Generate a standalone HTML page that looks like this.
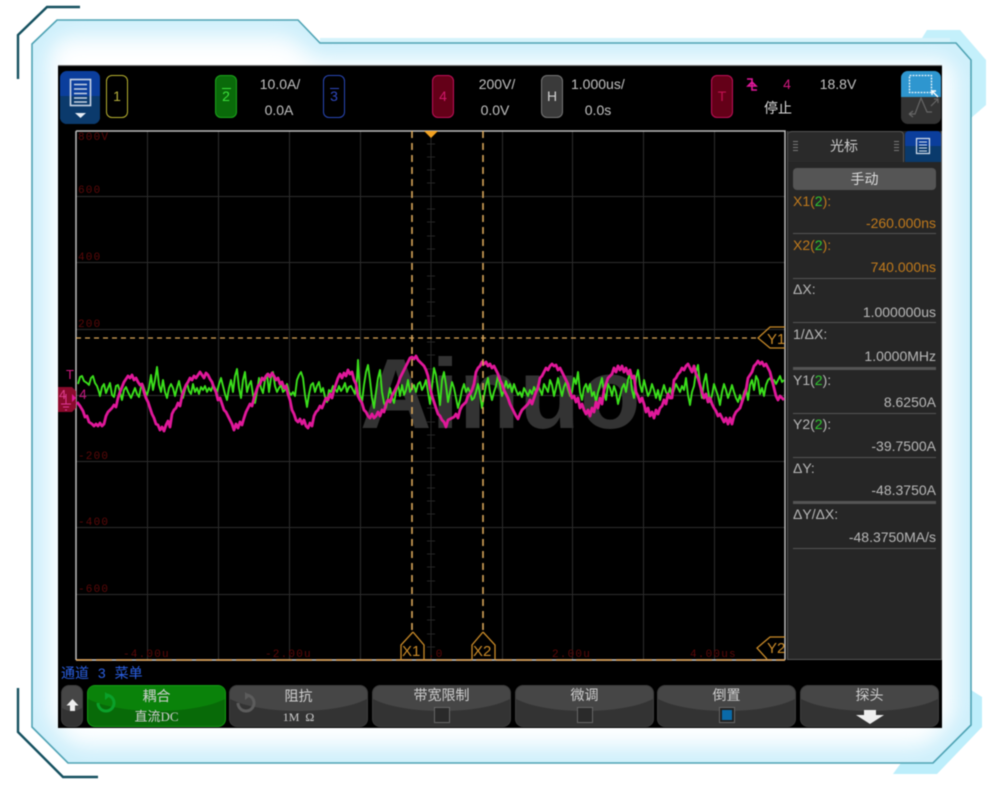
<!DOCTYPE html>
<html><head><meta charset="utf-8">
<style>
html,body{margin:0;padding:0;background:#fff}
body{width:1000px;height:786px;position:relative;overflow:hidden;font-family:"Liberation Sans","Noto Sans CJK SC",sans-serif;color:#c2c2c2;filter:blur(.45px)}
.a{position:absolute;white-space:nowrap}
.c{position:absolute;white-space:nowrap;transform:translateX(-50%)}
.t{font-size:14px;line-height:16px}
.box{position:absolute;width:22px;height:43px;top:75px;border-radius:6px;box-sizing:border-box;border:1px solid;text-align:center;font-size:14px;line-height:41px}
.key{position:absolute;top:685px;height:42px;width:139px;border-radius:8px;background:#333;overflow:hidden;box-sizing:border-box;border:1px solid #3c3c3c}
.key:before{content:"";position:absolute;left:-10px;right:-10px;top:-22px;height:47px;border-radius:50%;background:#464646}
.key.g{background:#086a08;border-color:#149c14}
.key.g:before{background:#0a820a}
.key span{position:absolute;left:0;right:0;text-align:center;z-index:1;color:#cfcfcf;font-size:14px;line-height:16px}
.cb{position:absolute;left:61px;top:21px;width:14px;height:14px;background:#2a2a2a;border:1px solid #666;z-index:1}
.lab{position:absolute;left:793px;font-size:14px;line-height:16px;color:#b8b8b8;white-space:nowrap}
.val{position:absolute;right:64px;font-size:14px;line-height:16px;color:#b8b8b8;white-space:nowrap}
.o{color:#c07a1c}.gr{color:#2fc82f}
.sep{position:absolute;left:793px;width:143px;height:1px;background:#555}
.rl{position:absolute;font:11px "Liberation Mono",monospace;letter-spacing:1.2px;color:#5c0808;white-space:nowrap;line-height:12px}
</style></head><body>

<svg class="a" style="left:0;top:0" width="1000" height="786" viewBox="0 0 1000 786">
<defs>
<clipPath id="fr"><path d="M32 44L57 20H298L320 43H956L971 60V725L933 763H68L32 727Z"/></clipPath>
<filter id="bl" x="-10%" y="-10%" width="120%" height="120%"><feGaussianBlur stdDeviation="13"/></filter>
</defs>
<path d="M919 43L927 30H960L986 60V105L971 118V60L956 43Z" fill="#c4f0fb"/>
<path d="M320 38H950V43H320Z" fill="#d6f3fb"/>
<path d="M971 690L982 697V727L937 774H893L901 763H933L971 725Z" fill="#bdeefb"/>
<path d="M32 44L57 20H298L320 43H956L971 60V725L933 763H68L32 727Z" fill="#fff"/>
<g clip-path="url(#fr)"><path d="M32 44L57 20H298L320 43H956L971 60V725L933 763H68L32 727Z" fill="none" stroke="#bfeafa" stroke-width="26" filter="url(#bl)"/></g>
<path d="M32 44L57 20H298L320 43H956L971 60V725L933 763H68L32 727Z" fill="none" stroke="#4fa3b4" stroke-width="1.6"/>
<path d="M18 79V35L47 7H80" fill="none" stroke="#14505f" stroke-width="2.4"/>
<path d="M18 688V732L63 777H98" fill="none" stroke="#14505f" stroke-width="2.4"/>
</svg>

<div class="a" style="left:58px;top:65px;width:884px;height:663px;background:#000;border-top:1px solid #777;box-sizing:border-box"></div>

<!-- plot -->
<svg class="a" style="left:58px;top:65px" width="884" height="663" viewBox="58 65 884 663">
<g stroke="#2c2c2c" stroke-width="1">
<path d="M147.5 131V660M218.5 131V660M289.5 131V660M360.5 131V660M502.5 131V660M572.5 131V660M643.5 131V660M714.5 131V660"/>
<path d="M76 196.5H785M76 262.5H785M76 329.5H785M76 395.5H785M76 461.5H785M76 527.5H785M76 594.5H785"/>
</g>
<path d="M431 131V660" stroke="#262626"/>
<path d="M427 144H435M427 157H435M427 170H435M427 183H435M427 209H435M427 222H435M427 236H435M427 249H435M427 276H435M427 289H435M427 302H435M427 316H435M427 342H435M427 355H435M427 369H435M427 382H435M427 408H435M427 422H435M427 435H435M427 448H435M427 475H435M427 488H435M427 501H435M427 514H435M427 541H435M427 554H435M427 567H435M427 581H435M427 607H435M427 620H435M427 634H435M427 647H435" stroke="#262626"/>
<path d="M76 131H785V660M76 131V660" fill="none" stroke="#bdbdbd" stroke-width="1.5"/>
<path d="M76 660H785" stroke="#cfcfcf" stroke-width="1.5"/>
<text x="360" y="428" font-family="Liberation Sans" font-weight="700" font-size="99" fill="#333">Ainuo</text>
<polyline fill="none" stroke="#3be01c" stroke-width="1.9" stroke-linejoin="round" points="78,384 80,377 82,376 84,381 87,383 89,385 91,378 93,376 95,383 97,386 99,392 100,396 102,387 104,384 106,393 108,388 110,383 112,395 114,397 116,386 118,385 120,392 122,400 124,390 126,387 128,392 131,398 133,393 135,388 137,394 139,397 141,387 143,385 145,391 147,395 149,388 151,375 153,390 155,380 157,367 159,385 161,392 163,380 165,392 167,398 169,388 171,384 173,388 175,396 177,388 179,381 181,390 183,398 185,390 187,383 189,391 191,394 193,384 195,392 197,388 199,394 201,387 203,390 205,386 207,392 209,388 211,391 213,385 215,388 217,392 219,384 221,378 223,386 225,394 227,400 229,388 231,380 233,392 235,376 237,369 239,388 241,398 243,380 245,372 247,392 249,385 251,381 253,395 255,403 257,392 259,378 261,388 263,393 265,380 267,374 269,392 271,378 273,372 275,386 277,392 279,388 281,385 283,392 285,390 287,384 289,392 291,395 293,392 295,396 297,380 299,375 301,372 303,378 305,395 307,407 309,394 311,385 313,383 315,392 317,386 319,382 321,392 323,388 325,397 327,402 329,390 331,392 333,386 335,389 337,392 339,386 341,391 343,388 345,383 347,392 349,387 351,386 353,390 355,394 357,378 358,360 360,395 362,402 364,385 366,372 368,365 370,380 372,398 374,408 376,392 378,378 380,370 382,392 384,403 386,408 388,398 390,388 392,397 394,403 396,392 398,384 400,396 402,385 404,395 406,390 408,380 410,392 412,388 414,385 416,392 418,384 420,382 422,390 424,386 426,380 428,392 430,404 432,386 434,368 436,375 438,390 440,405 442,380 444,372 446,385 448,402 450,392 452,382 454,388 456,398 458,408 460,400 462,390 464,384 466,392 468,388 470,392 472,400 474,398 476,392 478,384 480,394 482,408 484,396 486,385 488,378 490,392 492,400 494,392 496,386 498,375 500,386 502,396 504,390 506,381 508,388 510,384 512,392 514,384 516,390 518,395 520,392 522,397 524,388 526,392 528,396 530,390 532,394 534,387 536,392 538,385 540,390 542,395 544,384 546,388 548,392 550,380 552,385 554,396 556,388 558,378 560,388 562,396 564,387 566,382 568,390 570,396 572,392 574,378 576,384 578,372 580,392 582,400 584,388 586,384 588,392 590,384 592,396 594,392 596,402 598,392 600,385 602,378 604,392 606,400 608,384 610,388 612,396 614,386 616,392 618,404 620,396 622,388 624,384 626,392 628,380 630,372 632,390 634,398 636,378 638,370 640,385 642,392 644,380 646,388 648,396 650,392 652,384 654,390 656,398 658,390 660,400 662,392 664,385 666,392 668,395 670,388 672,396 674,390 676,384 678,388 680,392 682,386 684,390 686,378 688,395 690,405 692,392 694,386 696,372 698,365 700,385 702,398 704,382 706,374 708,390 710,402 712,395 714,384 716,390 718,396 720,405 722,392 724,384 726,390 728,398 730,392 732,385 734,392 736,398 738,402 740,395 742,402 744,392 746,388 748,400 750,385 752,380 754,390 756,376 758,380 760,394 762,388 764,396 766,385 768,380 770,378 772,382 774,380 776,384 778,380 780,376 782,382 784,380"/>
<polyline fill="none" stroke="#e0189a" stroke-width="2.8" stroke-linejoin="round" points="77,402 80,406 83,411 85,417 87,416 89,422 92,424 94,426 96,424 98,426 100,423 102,426 104,424 106,416 108,412 110,410 112,408 114,405 116,407 118,398 120,392 122,387 124,382 126,379 128,376 130,378 132,375 134,380 136,378 138,382 140,385 142,384 144,392 146,398 148,402 150,408 152,414 154,418 156,424 158,425 160,430 162,427 164,431 166,425 168,421 170,427 172,414 174,410 176,408 178,403 180,406 182,396 184,390 186,385 188,382 190,378 192,380 194,376 196,378 198,375 200,372 202,375 204,378 206,373 208,375 210,379 212,382 214,388 216,392 218,400 220,398 222,404 224,410 226,412 228,416 230,420 232,424 234,430 236,424 238,428 240,422 242,425 244,418 246,412 248,408 250,404 252,406 254,398 256,392 258,386 260,384 262,378 264,380 266,376 268,374 270,377 272,373 274,376 276,380 278,378 280,384 282,382 284,388 286,386 288,394 290,400 292,410 294,414 296,420 298,422 300,419 302,424 304,420 306,426 308,428 310,423 312,426 314,416 316,412 318,410 320,406 322,408 324,403 326,398 328,400 330,394 332,398 334,390 336,384 338,378 340,374 342,378 344,373 346,376 348,370 350,374 352,372 354,380 356,384 358,396 360,400 362,403 364,410 366,412 368,416 370,418 372,414 374,418 376,416 378,412 380,416 382,410 384,412 386,404 388,400 390,402 392,396 394,392 396,388 398,384 400,378 402,374 404,370 406,366 408,362 410,358 412,357 414,359 416,356 418,360 420,362 422,364 424,366 426,370 428,376 430,388 432,396 434,402 436,408 438,414 440,416 442,420 444,422 446,427 448,420 450,419 452,418 454,417 456,414 458,418 460,410 462,406 464,404 466,402 468,396 470,394 472,390 474,384 476,372 478,368 480,366 482,362 484,364 486,362 488,366 490,364 492,368 494,366 496,370 498,374 500,380 502,384 504,390 506,394 508,398 510,404 512,408 514,412 516,416 518,419 520,414 522,410 524,408 526,406 528,404 530,400 532,404 534,398 536,392 538,388 540,378 542,376 544,372 546,368 548,370 550,366 552,364 554,366 556,365 558,370 560,368 562,372 564,376 566,380 568,384 570,392 572,398 574,396 576,402 578,398 580,408 582,404 584,410 586,414 588,410 590,416 592,408 594,412 596,402 598,408 600,398 602,404 604,390 606,384 608,378 610,376 612,374 614,368 616,372 618,366 620,370 622,366 624,372 626,368 628,374 630,370 632,378 634,376 636,392 638,396 640,402 642,398 644,404 646,412 648,408 650,416 652,412 654,418 656,410 658,414 660,408 662,406 664,400 666,404 668,394 670,398 672,398 674,380 676,378 678,374 680,372 682,368 684,370 686,366 688,364 690,368 692,372 694,366 696,374 698,378 700,385 702,392 704,398 706,394 708,402 710,398 712,404 714,408 716,411 718,416 720,414 722,418 724,422 726,418 728,424 730,418 732,424 734,416 736,412 738,410 740,408 742,402 744,396 746,390 748,378 750,375 752,372 754,366 756,364 758,361 760,364 762,362 764,366 766,364 768,368 770,372 772,380 774,388 776,396 778,400 780,396 782,398 784,400"/>
<path d="M412 131V633M483 131V633" stroke="#d9a65a" stroke-width="1.6" stroke-dasharray="7 5"/>
<path d="M76 338H759" stroke="#d9a65a" stroke-width="1.2" stroke-dasharray="5 4"/>
<path d="M76 660H785" stroke="#e0a050" stroke-width="1.6" stroke-dasharray="16 4"/>
<path d="M424 131H438L431 138Z" fill="#f0a020"/>
<path d="M413 632L424 645V660M413 632L401 645V660M483 632L495 645V660M483 632L472 645V660" fill="none" stroke="#c98a28" stroke-width="1.3"/>
<path d="M785 327H770L758 338L770 348H785M785 637H770L757 648L767 659" fill="none" stroke="#c98a28" stroke-width="1.3"/>
<path d="M58 387H72L76 391V408L72 412H58Z" fill="#8a0a2c"/>
<path d="M66 394V404M61 404H71M63 407H69M65 410H67" stroke="#e0389a" stroke-width="1"/>
<path d="M72 394L76 398L72 402Z" fill="#e0189a"/>
</svg>
<div class="a" style="left:402px;top:643px;font-size:15px;line-height:17px;color:#c98a28">X1</div>
<div class="a" style="left:473px;top:643px;font-size:15px;line-height:17px;color:#c98a28">X2</div>
<div class="a" style="left:767px;top:331px;font-size:15px;line-height:17px;color:#c98a28">Y1</div>
<div class="a" style="left:767px;top:640px;font-size:15px;line-height:17px;color:#c98a28">Y2</div>
<div class="a" style="left:66px;top:367px;font-size:13px;line-height:15px;color:#d0187f">T</div>
<div class="a" style="left:59px;top:387px;font-size:13px;line-height:15px;color:#e04090">4</div>
<div class="a" style="left:79px;top:386px;font-size:14px;line-height:16px;color:#c0187f">4</div>

<div class="rl" style="left:78px;top:132px">800V</div>
<div class="rl" style="left:78px;top:185px">600</div>
<div class="rl" style="left:78px;top:252px">400</div>
<div class="rl" style="left:78px;top:319px">200</div>
<div class="rl" style="left:78px;top:451px">-200</div>
<div class="rl" style="left:78px;top:517px">-400</div>
<div class="rl" style="left:78px;top:584px">-600</div>
<div class="rl" style="left:123px;top:649px">-4.00u</div>
<div class="rl" style="left:265px;top:649px">-2.00u</div>
<div class="rl" style="left:428px;top:649px">.0</div>
<div class="rl" style="left:552px;top:649px">2.00u</div>
<div class="rl" style="left:690px;top:649px">4.00us</div>

<!-- header -->
<svg class="a" style="left:60px;top:71px" width="41" height="53" viewBox="0 0 41 53">
<rect width="40" height="53" rx="7" fill="#0b3e9c"/>
<path d="M0 25H40V46A7 7 0 0 1 33 53H7A7 7 0 0 1 0 46Z" fill="#0b3a6c"/>
<rect x="10.5" y="8.5" width="20" height="26" fill="none" stroke="#c8d4e4" stroke-width="1.6"/>
<path d="M14 13.5H27M14 18H27M14 22.500H27M14 27H27M14 31H27" stroke="#c8d4e4" stroke-width="1.5"/>
<path d="M15 42H26L20.500 47Z" fill="#e8eef6"/>
</svg>
<div class="box" style="left:106px;border-color:#b8b230;color:#b4ae3c">1</div>
<div class="box" style="left:215px;background:#0a6a0a;border-color:#1ca51c;color:#3ce03c">2<span class="a" style="left:6px;top:12px;width:9px;height:1px;background:#3ce03c"></span></div>
<div class="c t" style="left:280px;top:76px">10.0A/</div>
<div class="c t" style="left:279px;top:102px">0.0A</div>
<div class="box" style="left:323px;border-color:#2a48b8;color:#2f49c0">3<span class="a" style="left:6px;top:12px;width:9px;height:1px;background:#2f49c0"></span></div>
<div class="box" style="left:432px;background:#640018;border-color:#c0105a;color:#d0186a">4</div>
<div class="c t" style="left:497px;top:76px">200V/</div>
<div class="c t" style="left:495px;top:102px">0.0V</div>
<div class="box" style="left:541px;background:#3a3a3a;border-color:#777;color:#d0d0d0">H</div>
<div class="a t" style="left:571px;top:76px">1.000us/</div>
<div class="c t" style="left:598px;top:102px">0.0s</div>
<div class="box" style="left:711px;background:#640018;border-color:#c0105a;color:#c01050">T</div>
<svg class="a" style="left:745px;top:77px" width="14" height="16" viewBox="0 0 14 16"><path d="M2 2H7V13H12M7 5L3 9H11L7 5" fill="none" stroke="#e0189a" stroke-width="1.6"/></svg>
<div class="c t" style="left:787px;top:76px;color:#d0187f">4</div>
<div class="c t" style="left:838px;top:76px">18.8V</div>
<div class="c t" style="left:778px;top:100px;color:#ddd">停止</div>
<svg class="a" style="left:901px;top:71px" width="40" height="53" viewBox="0 0 40 53">
<rect width="40" height="53" rx="7" fill="#333"/>
<path d="M0 26V7A7 7 0 0 1 7 0H33A7 7 0 0 1 40 7V26Z" fill="#2e96cf"/>
<rect x="8.500" y="4.500" width="22" height="17" fill="none" stroke="#e6f4fb" stroke-width="1.3" stroke-dasharray="2 1"/>
<path d="M31 20L37 26M31 20H35M31 20V24" stroke="#fff" stroke-width="1.400"/>
<path d="M8 43H14L20 27L26 41H31M30 35L37 28M33 28H37V32M8 43L12 40M8 43L12 46" fill="none" stroke="#666" stroke-width="1.200"/>
</svg>

<!-- side panel -->
<div class="a" style="left:787px;top:131px;width:155px;height:529px;background:#262626;border:1px solid #555;border-top:0;box-sizing:border-box"></div>
<div class="a" style="left:788px;top:131px;width:116px;height:31px;background:#2a2a2a;border-top:1px solid #555;border-right:1px solid #555;border-radius:4px 4px 0 0;box-sizing:border-box"></div>
<div class="a" style="left:793px;top:141px;width:5px;height:10px;background:repeating-linear-gradient(#777 0 1px,transparent 1px 3px)"></div>
<div class="a" style="left:894px;top:141px;width:5px;height:10px;background:repeating-linear-gradient(#777 0 1px,transparent 1px 3px)"></div>
<div class="c t" style="left:844px;top:138px;color:#ccc">光标</div>
<svg class="a" style="left:905px;top:131px" width="36" height="31" viewBox="0 0 36 31">
<path d="M0 31V4A4 4 0 0 1 4 0H32A4 4 0 0 1 36 4V31Z" fill="#0a3a6c"/>
<path d="M0 15V4A4 4 0 0 1 4 0H32A4 4 0 0 1 36 4V15Z" fill="#0b3e9c"/>
<rect x="11.500" y="7.500" width="13" height="15" fill="none" stroke="#d8e2ee" stroke-width="1.200"/>
<path d="M14 11H22M14 14H22M14 17H22M14 20H22" stroke="#d8e2ee"/>
</svg>
<div class="a" style="left:793px;top:168px;width:143px;height:22px;background:#555;border-radius:4px;text-align:center;font-size:14px;line-height:22px;color:#ddd">手动</div>

<div class="lab o" style="top:193px">X1(<span class="gr">2</span>):</div>
<div class="val o" style="top:215px">-260.000ns</div><div class="sep" style="top:233px"></div>
<div class="lab o" style="top:237px">X2(<span class="gr">2</span>):</div>
<div class="val o" style="top:259px">740.000ns</div><div class="sep" style="top:278px"></div>
<div class="lab" style="top:281px">ΔX:</div>
<div class="val" style="top:304px">1.000000us</div><div class="sep" style="top:322px"></div>
<div class="lab" style="top:326px">1/ΔX:</div>
<div class="val" style="top:348px">1.0000MHz</div><div class="sep" style="top:367px;height:3px;background:#555"></div>
<div class="lab" style="top:372px">Y1(<span class="gr">2</span>):</div>
<div class="val" style="top:394px">8.6250A</div><div class="sep" style="top:413px"></div>
<div class="lab" style="top:416px">Y2(<span class="gr">2</span>):</div>
<div class="val" style="top:438px">-39.7500A</div><div class="sep" style="top:457px"></div>
<div class="lab" style="top:460px">ΔY:</div>
<div class="val" style="top:482px">-48.3750A</div><div class="sep" style="top:501px;height:3px;background:#555"></div>
<div class="lab" style="top:506px">ΔY/ΔX:</div>
<div class="val" style="top:529px">-48.3750MA/s</div><div class="sep" style="top:548px"></div>

<!-- softkeys -->
<div class="a" style="left:61px;top:665px;font-size:14px;line-height:16px;color:#2a5fe0;white-space:pre;word-spacing:5px">通道 3 菜单</div>
<div class="key" style="left:61px;width:22px"><svg class="a" style="left:4px;top:12px;z-index:1" width="13" height="15" viewBox="0 0 13 15"><path d="M6.500 1L12.500 7.500H9V13H4V7.500H.5Z" fill="#eee"/></svg></div>
<div class="key g" style="left:87px"><svg class="a" style="left:6px;top:6px;z-index:1" width="24" height="22" viewBox="0 0 24 22"><path d="M12 3A8 8 0 1 1 4 11" fill="none" stroke="#0aa02a" stroke-width="3"/><path d="M11 0L16 4L11 8Z" fill="#0aa02a"/></svg><span style="top:2px">耦合</span><span style="top:23px;font-family:'Liberation Serif','Noto Sans CJK SC',serif;font-size:13px">直流DC</span></div>
<div class="key" style="left:229px"><svg class="a" style="left:4px;top:6px;z-index:1" width="24" height="22" viewBox="0 0 24 22"><path d="M12 3A8 8 0 1 1 4 11" fill="none" stroke="#5c5c5c" stroke-width="3"/><path d="M11 0L16 4L11 8Z" fill="#5c5c5c"/></svg><span style="top:2px">阻抗</span><span style="top:23px;font-family:'Liberation Serif',serif;font-size:12px;white-space:pre">1M  Ω</span></div>
<div class="key" style="left:372px"><span style="top:1px">带宽限制</span><i class="cb"></i></div>
<div class="key" style="left:515px"><span style="top:1px">微调</span><i class="cb"></i></div>
<div class="key" style="left:657px"><span style="top:1px">倒置</span><i class="cb" style="background:#0a6aa8;box-shadow:inset 0 0 0 2px #222"></i></div>
<div class="key" style="left:800px"><span style="top:1px">探头</span><svg class="a" style="left:55px;top:23px;z-index:1" width="28" height="16" viewBox="0 0 28 16"><path d="M8 1H20V6H28L14 15L0 6H8Z" fill="#eee"/></svg></div>
</body></html>
